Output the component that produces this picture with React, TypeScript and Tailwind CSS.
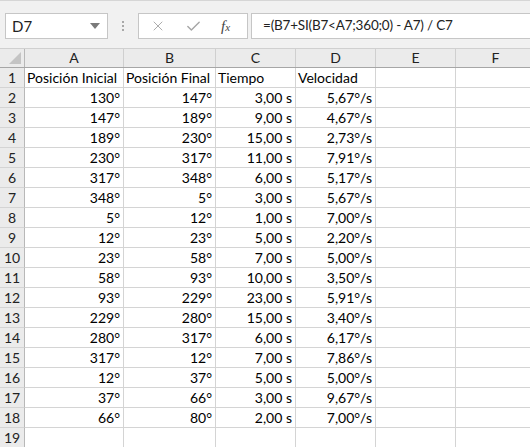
import React from 'react';
import { X, Check } from 'lucide-react';

const rows: string[][] = [
    ['Posición Inicial', 'Posición Final', 'Tiempo', 'Velocidad'],
    ['130°', '147°', '3,00 s', '5,67°/s'],
    ['147°', '189°', '9,00 s', '4,67°/s'],
    ['189°', '230°', '15,00 s', '2,73°/s'],
    ['230°', '317°', '11,00 s', '7,91°/s'],
    ['317°', '348°', '6,00 s', '5,17°/s'],
    ['348°', '5°', '3,00 s', '5,67°/s'],
    ['5°', '12°', '1,00 s', '7,00°/s'],
    ['12°', '23°', '5,00 s', '2,20°/s'],
    ['23°', '58°', '7,00 s', '5,00°/s'],
    ['58°', '93°', '10,00 s', '3,50°/s'],
    ['93°', '229°', '23,00 s', '5,91°/s'],
    ['229°', '280°', '15,00 s', '3,40°/s'],
    ['280°', '317°', '6,00 s', '6,17°/s'],
    ['317°', '12°', '7,00 s', '7,86°/s'],
    ['12°', '37°', '5,00 s', '5,00°/s'],
    ['37°', '66°', '3,00 s', '9,67°/s'],
    ['66°', '80°', '2,00 s', '7,00°/s'],
    ['', '', '', ''],
];

const colWidths = ['w-[99px]', 'w-[92px]', 'w-[80px]', 'w-[80px]', 'w-[80px]', 'w-[80px]'];
const colNames = ['A', 'B', 'C', 'D', 'E', 'F'];

const FormulaBar = () => (
    <div className="h-[48px] bg-[#f1f1f1] border-t border-[#d6d6d6] flex items-start pt-[12px]">
        {/* Name box */}
        <div className="ml-[5px] w-[103px] h-[26px] bg-white border border-[#c6c6c6] flex items-center justify-between pl-[6px] pr-[7px]">
            <span className="text-[15px] text-[#222]">D7</span>
            <svg width="10" height="6" viewBox="0 0 10 6">
                <path d="M0 0 L10 0 L5 6 Z" fill="#7a7a7a" />
            </svg>
        </div>
        {/* Grip */}
        <div className="w-[30px] h-[26px] flex flex-col items-center justify-center gap-[2px]">
            <span className="w-[2px] h-[2px] bg-[#a8a8a8]" />
            <span className="w-[2px] h-[2px] bg-[#a8a8a8]" />
            <span className="w-[2px] h-[2px] bg-[#a8a8a8]" />
        </div>
        {/* Buttons */}
        <div className="w-[110px] h-[26px] bg-white border border-[#c6c6c6] flex items-center">
            <X className="w-[16px] h-[16px] ml-[11px] text-[#a6a6a6]" strokeWidth={1.4} />
            <Check className="w-[17px] h-[17px] ml-[19px] text-[#a6a6a6]" strokeWidth={2} />
            <span className="ml-[19px] font-['Liberation_Serif',serif] italic text-[15px] text-[#444] leading-none">
                f<span className="text-[11px]">x</span>
            </span>
        </div>
        {/* Formula input */}
        <div className="ml-[3px] flex-1 h-[26px] bg-white border border-[#c6c6c6] border-r-0 flex items-center pl-[11px]">
            <span className="text-[13.5px] tracking-[-0.2px] text-[#222]">=(B7+SI(B7&lt;A7;360;0) - A7) / C7</span>
        </div>
    </div>
);

const App = () => {
    return (
        <div className="w-[530px] h-[447px] overflow-hidden bg-white font-['Lato',sans-serif] text-[14px] leading-none">
            <FormulaBar />
            {/* Column headers */}
            <div className="flex h-[20px] bg-[#ebebeb] border-t border-[#d0d0d0] border-b border-b-[#a6a6a6]">
                <div className="w-[25px] shrink-0 border-r border-[#b8b8b8] relative">
                    <svg className="absolute right-[3px] bottom-[3px]" width="12" height="12" viewBox="0 0 12 12">
                        <path d="M12 0 L12 12 L0 12 Z" fill="#c4c4c4" />
                    </svg>
                </div>
                {colNames.map((c, i) => (
                    <div key={c} className={`${colWidths[i]} shrink-0 border-r border-[#cfcfcf] flex items-center justify-center text-[#222]`}>
                        {c}
                    </div>
                ))}
            </div>
            {/* Rows */}
            {rows.map((r, ri) => (
                <div key={ri} className="flex h-[20px]">
                    <div className="w-[25px] shrink-0 bg-[#ebebeb] border-r border-[#b8b8b8] border-b border-b-[#d4d4d4] flex items-end justify-center pb-[2px] text-[#222]">
                        {ri + 1}
                    </div>
                    {colNames.map((c, ci) => {
                        const v = r[ci] ?? '';
                        const header = ri === 0;
                        return (
                            <div
                                key={c}
                                className={`${colWidths[ci]} shrink-0 border-r border-b border-[#d4d4d4] flex items-end pb-[2px] whitespace-nowrap text-black ${header ? 'justify-start pl-[2px]' : 'justify-end pr-[3px]'}`}
                            >
                                {v}
                            </div>
                        );
                    })}
                </div>
            ))}
        </div>
    );
};

export default App;
